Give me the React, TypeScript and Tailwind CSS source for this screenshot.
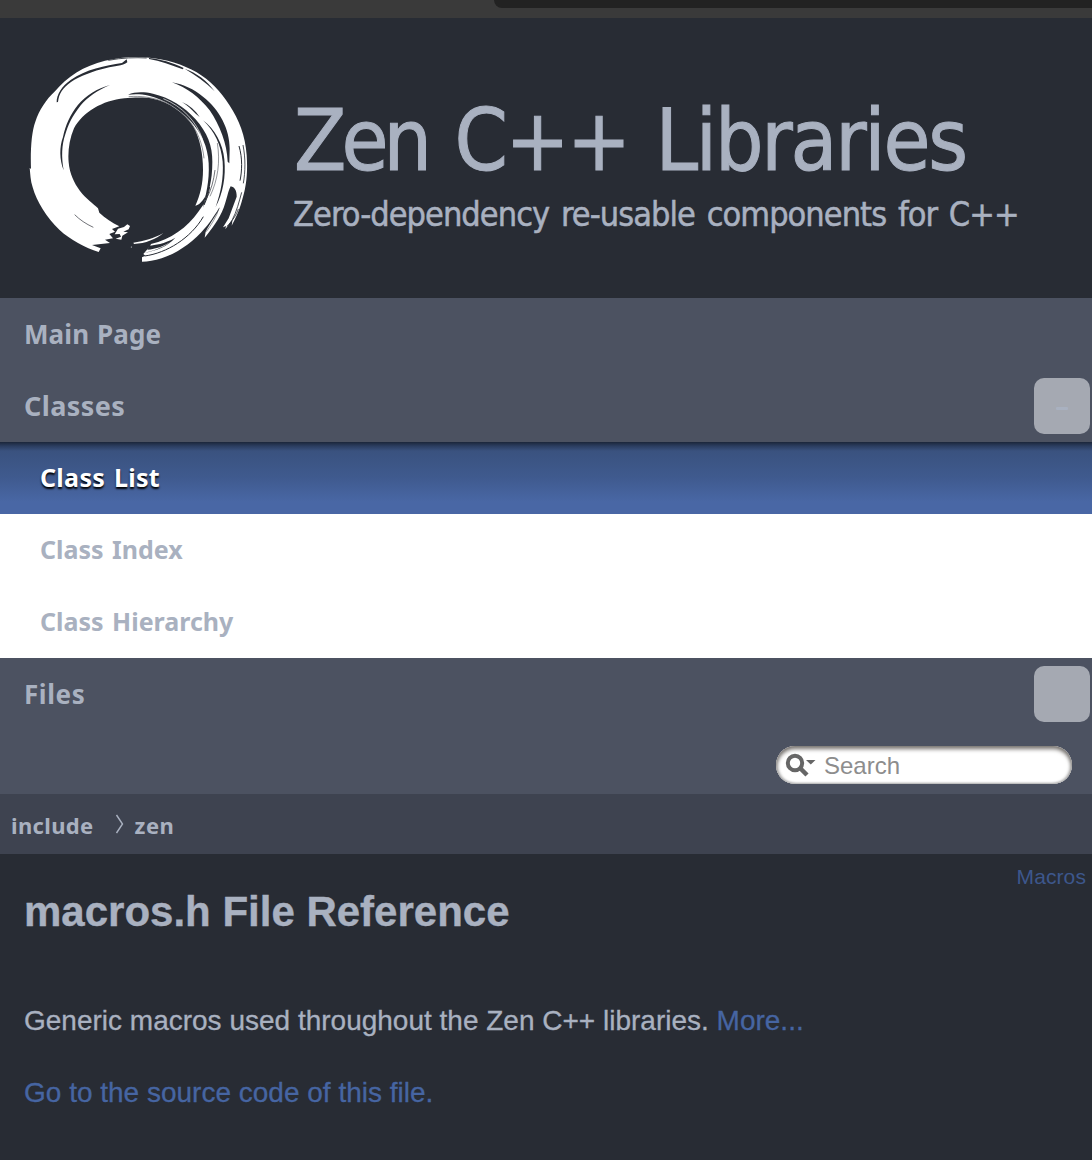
import React from "react";

function EnsoLogo() {
  return (
    <svg className="block h-[225px] w-[240px] shrink-0" viewBox="0 0 720 675" fill="none" aria-label="Zen logo">
      <path
        fill="#fff"
        d="M33 372 C31 320 34 262 46 230 C58 195 78 164 105 139 C140 96 192 62 255 47 C300 36 345 33 388 38 C435 42 490 58 530 82 C570 106 602 140 628 180 C658 226 676 272 680 330 C684 388 678 430 665 470 C656 502 645 522 635 542 L638 522 L616 553 L618 543 L609 547 L626 520 L650 455 C650 437 644 426 632 424 C624 438 620 466 611 488 C598 522 575 552 554 578 L557 560 C572 532 590 510 600 486 C588 502 573 530 555 549 C520 592 472 624 425 640 C403 647 384 650 366 650 L366 637 L376 632 L370 627 L390 604 L393 597 C452 582 502 548 535 500 L552 476 L558 450 C550 466 538 480 526 482 C540 450 549 418 549 374 C549 326 540 280 520 245 C492 202 448 171 398 161 C370 156 338 158 313 160 C248 166 188 202 162 250 C148 282 143 320 146 352 C149 386 162 414 180 438 C197 460 220 476 234 490 L238 503 C256 520 276 533 298 544 L276 552 L285 560 L268 567 L279 580 L255 584 L270 594 L216 600 L242 610 L236 621 C196 608 150 584 118 554 C80 518 50 470 38 427 C31 405 31 388 29 368 Z"
      />
      <path fill="#fff" d="M294 551 L312 546 L322 538 L330 543 L326 553 L310 560 L324 562 L307 572 L304 584 L287 581 L303 575 L299 567 L284 568 Z" />
      <path fill="#fff" d="M340 593 C372 588 402 580 430 564 C409 583 376 595 342 597 Z" />
      <circle cx="334" cy="606" r="1.5" fill="#fff" />
      <g fill="#282c34">
        <path d="M110 172 C109 148 126 123 153 104 C196 74 257 61 306 54 L320 43 L322 52 C308 63 282 64 259 69 C220 78 179 93 153 111 C128 129 117 145 114 171 Z" />
        <path d="M131 376 C118 345 118 304 129 276 C136 242 151 208 173 181 C197 151 232 130 270 120 C233 136 203 156 181 182 C156 214 144 240 136 268 C125 300 124 336 131 376 Z" />
        <path d="M324 149 C345 140 371 140 399 146 C448 157 494 186 526 222 C562 262 578 304 577 351 C577 408 566 446 549 488 C557 448 569 412 566 355 C563 305 545 265 512 228 C478 190 435 165 387 152 C362 146 340 147 324 149 Z" />
        <path d="M456 112 C490 118 522 133 549 155 C600 195 629 253 629 311 L628 355 L623 350 C621 296 600 242 569 196 C539 157 500 128 456 112 Z" />
        <path d="M549 226 C584 252 609 297 613 343 C618 395 609 446 587 486 C603 439 611 400 608 350 C603 299 584 260 549 226 Z" />
        <path d="M486 171 C509 181 526 196 539 216 L528 207 C514 192 501 181 486 171 Z" />
        <path d="M387 39 C420 42 457 53 491 69 L488 73 C455 60 420 48 387 42 Z" />
        <path d="M494 71 C530 84 560 106 584 139 C556 111 527 90 494 71 Z" />
        <path d="M370 624 C406 618 444 604 466 578 C432 597 405 600 388 602 L382 614 C408 612 432 603 452 590 C426 609 400 618 370 624 Z" />
      </g>
      <g stroke="#282c34" strokeWidth="2.5">
        <path d="M164 509 C179 524 198 537 220 547" strokeWidth="2" />
        <path d="M374 633 C440 624 512 580 550 515" strokeWidth="3" />
        <path d="M569 426 C565 446 560 464 552 480" strokeWidth="3" />
        <path d="M265 46 C306 38 347 37 380 39" />
        <path d="M657 303 C668 340 666 379 660 407" strokeWidth="3" />
        <path d="M669 300 C677 341 676 380 670 415" />
        <path d="M655 492 C650 510 636 528 621 544" />
        <path d="M665 442 C658 468 650 500 637 524" />
        <path d="M592 294 C601 350 594 404 570 454" strokeWidth="1.5" />
        <path d="M585 375 C581 407 574 434 560 460" strokeWidth="2" />
        <path d="M562 172 C586 197 602 226 611 254" strokeWidth="2" />
        <path d="M326 155 C400 149 465 176 504 222 C532 255 548 298 552 340" strokeWidth="1.5" />
        <path d="M597 490 C590 515 573 540 559 560" strokeWidth="1.5" />
      </g>
      <path d="M430 161 C487 184 530 230 548 284" stroke="#fff" strokeWidth="2" />
    </svg>
  );
}

const navText = "font-['Noto_Sans'] font-bold text-[#a9b1c0]";

function NavRow({ label, toggle, className }: { label: string; toggle?: string; className: string }) {
  return (
    <div className="flex h-[72px] items-center justify-between pr-[2px] pl-6">
      <span className={`${navText} leading-9 ${className}`}>{label}</span>
      {toggle !== undefined && (
        <span className="flex h-14 w-14 items-center justify-center rounded-[10px] bg-[#a5a9b2]">
          {toggle === "-" && <span className="mt-[5px] h-[3px] w-3 rounded-[1px] bg-[#a9b1c0]" />}
        </span>
      )}
    </div>
  );
}

function SearchBox() {
  return (
    <div className="flex h-[38px] w-[296px] items-center overflow-hidden rounded-full bg-white pl-2 shadow-[inset_0_3px_4px_#77736f,inset_0_-1px_2px_#bbb,inset_2px_0_3px_#ccc,inset_-2px_0_3px_#ccc]">
      <svg className="h-7 w-8 blur-[0.7px]" viewBox="0 0 32 28" fill="none" aria-hidden="true">
        <circle cx="11" cy="12" r="7.2" stroke="#666" strokeWidth="4" />
        <path d="M16.5 17.5 L23 24" stroke="#666" strokeWidth="4.5" />
        <path d="M22 9 H31.5 L26.8 13.5 Z" fill="#666" />
      </svg>
      <span className="mt-[2px] ml-2 font-['Liberation_Sans'] text-[24px] leading-7 text-[#8d8d8d]">Search</span>
    </div>
  );
}

export default function App() {
  return (
    <div className="flex h-[1160px] w-[1092px] flex-col overflow-hidden bg-[#282c34] font-['Liberation_Sans',sans-serif]">
      <div className="flex h-[18px] shrink-0 items-start justify-end bg-[#3a3a3a]">
        <div className="h-2 w-[598px] rounded-bl-[8px] bg-[#222]" />
      </div>

      <header className="flex h-[280px] shrink-0 items-start pt-[27px] pl-5 text-[#a9b1c0]">
        <EnsoLogo />
        <div className="ml-[33px] flex flex-col pt-[46px] font-['DejaVu_Sans_Condensed','DejaVu_Sans'] whitespace-nowrap">
          <h1 className="pl-px text-[85px] leading-[100px] tracking-[-2.6px] [-webkit-text-stroke:1px_#a9b1c0]">
            <span className="tracking-[-5px]">Zen</span>
            <span className="ml-[6px]"> C++</span>
            <span className="ml-[5px] tracking-[-2.2px]"> Libraries</span>
          </h1>
          <p className="mt-[2px] text-[34px] leading-[42px] tracking-[-0.95px] [word-spacing:3px] [-webkit-text-stroke:0.5px_#a9b1c0]">
            Zero-dependency re-usable components for C++
          </p>
        </div>
      </header>

      <nav className="shrink-0 bg-[#4c5261]">
        <NavRow label="Main Page" className="text-[26px] tracking-[0.1px] [word-spacing:1px]" />
        <NavRow label="Classes" toggle="-" className="text-[27px] tracking-[0.4px]" />
        <div className="flex h-[72px] items-center bg-[linear-gradient(to_bottom,#1b263a_0px,#2b3d5f_4px,#3a527f_9px,#3f5a8e_35px,#4967a5_60px,#4967a5_72px)] pl-10">
          <span className="mb-[3px] font-['Noto_Sans'] text-[25px] leading-9 font-bold tracking-[0.3px] text-white [word-spacing:2px] [text-shadow:0_2px_2px_#000]">Class List</span>
        </div>
        <div className="flex h-[72px] items-center bg-white pl-10">
          <span className={`${navText} mb-[3px] text-[25px] leading-9 [word-spacing:2px]`}>Class Index</span>
        </div>
        <div className="flex h-[72px] items-center bg-white pl-10">
          <span className={`${navText} mb-[3px] text-[25px] leading-9 [word-spacing:2px]`}>Class Hierarchy</span>
        </div>
        <NavRow label="Files" toggle="" className="text-[26px] tracking-[0.6px]" />
        <div className="flex h-16 justify-end pt-4 pr-5">
          <SearchBox />
        </div>
      </nav>

      <div className="flex h-[60px] shrink-0 items-center bg-[#3e4350] pl-[11px]">
        <span className={`${navText} mt-[2px] text-[22px] leading-8 tracking-[0.35px]`}>include</span>
        <svg className="ml-[21px] h-5 w-[10px]" viewBox="0 0 10 20" fill="none" aria-hidden="true">
          <path d="M1.5 1 L7.5 10 L1.5 19" stroke="#a9b1c0" strokeWidth="1.4" />
        </svg>
        <span className={`${navText} mt-[2px] ml-[10px] text-[22px] leading-8 tracking-[0.5px]`}>zen</span>
      </div>

      <main className="flex flex-col text-[#a9b1c0]">
        <div className="flex h-[116px] justify-between pr-[6px] pl-6">
          <h2 className="pt-8 text-[42px] leading-[52px] font-bold [-webkit-text-stroke:0.4px_#a9b1c0]">macros.h File Reference</h2>
          <a className="pt-[11px] text-[21px] leading-6 tracking-[0.1px] text-[#3d578c]">Macros</a>
        </div>
        <p className="mt-[33px] pl-6 text-[28px] leading-9 [-webkit-text-stroke:0.3px]">
          Generic macros used throughout the Zen C++ libraries. <a className="text-[#4665a2]">More...</a>
        </p>
        <p className="mt-9 pl-6 text-[28px] leading-9 text-[#4665a2] [-webkit-text-stroke:0.3px]">Go to the source code of this file.</p>
      </main>
    </div>
  );
}
